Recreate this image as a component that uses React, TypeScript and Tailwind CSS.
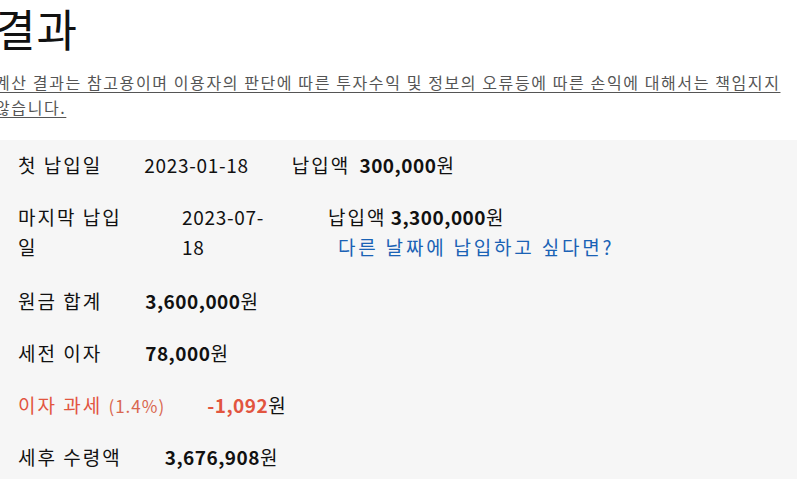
import React from "react";

const font = { fontFamily: '"Noto Sans CJK KR", "Noto Sans", sans-serif' };

function Won({ value, red }: { value: string; red?: boolean }) {
  return (
    <span className="tracking-[0.5px]">
      <span className={`font-bold ${red ? "text-[#e2553f]" : "text-[#111]"}`}>{value}</span>
      <span className="text-[#111]">원</span>
    </span>
  );
}

export default function App() {
  return (
    <div className="w-[800px] h-[488px] bg-white overflow-hidden text-[#111]" style={font}>
      <div className="-ml-[5px]">
        <h1 className="text-[44px] leading-[56px] font-normal tracking-[1px]">결과</h1>
        <p className="mt-[14px] text-[16px] leading-[25px] text-[#555] underline underline-offset-[3px] tracking-[1.6px] w-[801px] break-keep">
          계산 결과는 참고용이며 이용자의 판단에 따른 투자수익 및 정보의 오류등에 따른 손익에 대해서는 책임지지 않습니다.
        </p>
      </div>

      <div className="mt-[20px] w-[797px] h-[339px] bg-[#f6f6f6] pl-[18px] text-[19px] leading-[30px]">
        <div className="flex items-start pt-[10px] h-[52px]">
          <span className="mr-[42px] tracking-[2px]">첫 납입일</span>
          <span className="mr-[43px] tracking-[0.7px]">2023-01-18</span>
          <span>
            <span className="tracking-[2px] mr-[5px]">납입액</span> <Won value="300,000" />
          </span>
        </div>

        <div className="flex items-start pt-[10px] h-[84px]">
          <span className="w-[115px] mr-[49px] tracking-[2px]">마지막 납입일</span>
          <span className="w-[95px] mr-[51px] tracking-[0.7px]">2023-07-18</span>
          <div className="flex flex-col">
            <span>
              <span className="tracking-[2px]">납입액</span> <Won value="3,300,000" />
            </span>
            <a className="ml-[10px] text-[#1a62b5] cursor-pointer tracking-[2.8px]">다른 날짜에 납입하고 싶다면?</a>
          </div>
        </div>

        <div className="flex items-start pt-[10px] h-[52px]">
          <span className="mr-[43px] tracking-[2px]">원금 합계</span>
          <Won value="3,600,000" />
        </div>

        <div className="flex items-start pt-[10px] h-[52px]">
          <span className="mr-[43px] tracking-[2px]">세전 이자</span>
          <Won value="78,000" />
        </div>

        <div className="flex items-start pt-[10px] h-[52px]">
          <span className="mr-[42px] text-[#e2553f] tracking-[2px]">
            이자 과세 <span className="text-[17px] text-[#d9674f] tracking-[1px]">(1.4%)</span>
          </span>
          <Won value="-1,092" red />
        </div>

        <div className="flex items-start pt-[10px] h-[52px]">
          <span className="mr-[43px] tracking-[2px]">세후 수령액</span>
          <Won value="3,676,908" />
        </div>
      </div>
    </div>
  );
}
